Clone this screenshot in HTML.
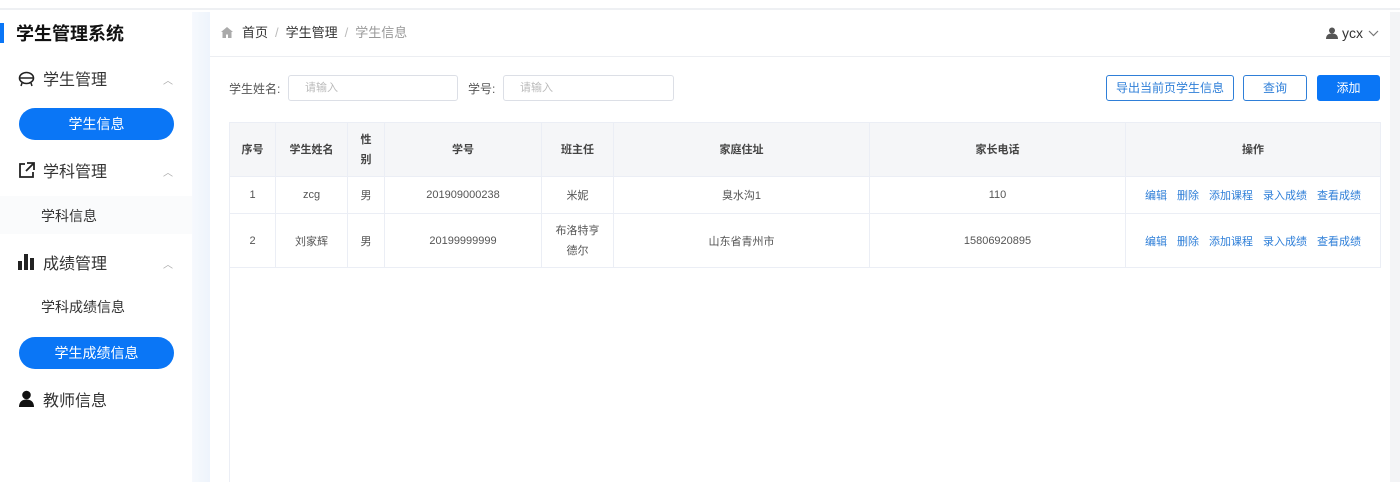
<!DOCTYPE html>
<html><head><meta charset="utf-8"><style>
*{margin:0;padding:0;box-sizing:border-box}
body{width:1400px;height:482px;overflow:hidden;background:#fff;font-family:"Liberation Sans","Noto Sans CJK SC",sans-serif;position:relative}
.top{position:absolute;left:0;top:0;width:1400px;height:10px;background:#fff;border-bottom:2px solid #eef0f3}
.side{position:absolute;left:0;top:12px;width:192px;height:470px;background:#fff}
.grad{position:absolute;left:192px;top:12px;width:18px;height:470px;background:linear-gradient(90deg,#f6f9fd,#eef4fc)}
.rstrip{position:absolute;left:1390px;top:12px;width:10px;height:470px;background:#f3f4f6}
.title{position:absolute;left:16px;top:20px;font-size:18px;font-weight:bold;color:#111}
.bar{position:absolute;left:0;top:23px;width:4px;height:20px;background:#0a76f6}
.mi{position:absolute;left:43px;font-size:16px;color:#333}
.ico{position:absolute;left:18px}
.car{position:absolute;left:163px;font-size:10px;color:#aaa}
.pill{position:absolute;left:19px;width:155px;height:32px;border-radius:16px;background:#0a76f6;color:#fff;font-size:14px;text-align:center;line-height:32px}
.sub{position:absolute;left:41px;font-size:14px;color:#333}
.hdr{position:absolute;left:210px;top:12px;width:1180px;height:45px;border-bottom:1px solid #eceef2;background:#fff}
.bc{position:absolute;left:242px;top:22px;font-size:13px;color:#333}
.bc span.s{color:#bbb;margin:0 7px}
.lbl{position:absolute;top:80px;font-size:12px;color:#555}
.inp{position:absolute;top:75px;height:26px;border:1px solid #dcdfe6;border-radius:3px;font-size:11px;color:#bbb;padding-left:16px;line-height:24px}
.btn{position:absolute;top:75px;height:26px;border:1px solid #2f7fd8;border-radius:3px;font-size:12px;color:#2f7fd8;text-align:center;line-height:24px;background:#fff}
table{position:absolute;left:229px;top:122px;width:1151px;border-collapse:collapse;font-size:11px;color:#555;text-align:center;table-layout:fixed}
td,th{border:1px solid #ebeef5;padding:0}
th{background:#f5f6f8;font-weight:bold;color:#444;height:54px;line-height:20px}
.lk{color:#2f7fd8;margin:0 5px}
.tl{position:absolute;left:229px;top:267px;width:1px;height:215px;background:#ebeef5}
</style></head><body>
<div class="top"></div>
<div class="side"></div><div class="grad"></div><div class="rstrip"></div>
<div class="bar"></div><div class="title">学生管理系统</div>
<svg class="ico" style="top:71px" width="17" height="16" viewBox="0 0 17 16"><ellipse cx="8.5" cy="7" rx="7" ry="5.5" fill="none" stroke="#222" stroke-width="1.6"/><line x1="2" y1="7" x2="15" y2="7" stroke="#222" stroke-width="1.5"/><path d="M4 12 L3 15 M13 12 L14 15" stroke="#222" stroke-width="1.5"/></svg>
<div class="mi" style="top:66px">学生管理</div><div class="car" style="top:72px">︿</div>
<div class="pill" style="top:108px">学生信息</div>
<svg class="ico" style="top:162px" width="17" height="17" viewBox="0 0 17 17"><path d="M7 2H2v13h13v-5" fill="none" stroke="#222" stroke-width="1.8"/><path d="M9 1h7v7M16 1L8 9" fill="none" stroke="#222" stroke-width="1.8"/></svg>
<div class="mi" style="top:158px">学科管理</div><div class="car" style="top:164px">︿</div>
<div style="position:absolute;left:0;top:196px;width:192px;height:38px;background:#fafbfc"></div>
<div class="sub" style="top:206px">学科信息</div>
<svg class="ico" style="top:254px" width="17" height="16" viewBox="0 0 17 16"><rect x="0" y="7" width="4" height="9" fill="#222"/><rect x="6" y="0" width="4" height="16" fill="#222"/><rect x="12" y="4" width="4" height="12" fill="#222"/></svg>
<div class="mi" style="top:250px">成绩管理</div><div class="car" style="top:256px">︿</div>
<div class="sub" style="top:297px">学科成绩信息</div>
<div class="pill" style="top:337px">学生成绩信息</div>
<svg class="ico" style="top:390px" width="17" height="17" viewBox="0 0 17 17"><circle cx="8.5" cy="5" r="4.3" fill="#111"/><path d="M1 17c0-5 3-7.5 7.5-7.5S16 12 16 17z" fill="#111"/></svg>
<div class="mi" style="top:387px">教师信息</div>
<div class="hdr"></div>
<svg style="position:absolute;left:221px;top:27px" width="12" height="11" viewBox="0 0 12 11"><path d="M6 0L0 5h1.5v6h3.5V7.5h2V11h3.5V5H12z" fill="#aaa"/></svg>
<div class="bc">首页<span class="s">/</span>学生管理<span class="s">/</span><span style="color:#999">学生信息</span></div>
<svg style="position:absolute;left:1326px;top:27px" width="12" height="12" viewBox="0 0 12 12"><circle cx="6" cy="3.5" r="3" fill="#555"/><path d="M0 12c0-4 2.5-5.5 6-5.5S12 8 12 12z" fill="#555"/></svg>
<div style="position:absolute;left:1342px;top:25px;font-size:14px;color:#333">ycx</div>
<svg style="position:absolute;left:1368px;top:30px" width="11" height="7" viewBox="0 0 11 7"><path d="M1 1l4.5 4.5L10 1" fill="none" stroke="#777" stroke-width="1.2"/></svg>
<div class="lbl" style="left:229px">学生姓名:</div>
<div class="inp" style="left:288px;width:170px">请输入</div>
<div class="lbl" style="left:468px">学号:</div>
<div class="inp" style="left:503px;width:171px">请输入</div>
<div class="btn" style="left:1106px;width:128px">导出当前页学生信息</div>
<div class="btn" style="left:1243px;width:64px">查询</div>
<div class="btn" style="left:1317px;width:63px;background:#0a76f6;border-color:#0a76f6;color:#fff">添加</div>
<table>
<colgroup><col style="width:46px"><col style="width:72px"><col style="width:37px"><col style="width:157px"><col style="width:72px"><col style="width:256px"><col style="width:256px"><col style="width:255px"></colgroup>
<tr><th>序号</th><th>学生姓名</th><th>性<br>别</th><th>学号</th><th>班主任</th><th>家庭住址</th><th>家长电话</th><th>操作</th></tr>
<tr style="height:37px"><td>1</td><td>zcg</td><td>男</td><td>201909000238</td><td>米妮</td><td>臭水沟1</td><td>110</td><td><span class="lk">编辑</span><span class="lk">删除</span><span class="lk">添加课程</span><span class="lk">录入成绩</span><span class="lk">查看成绩</span></td></tr>
<tr style="height:54px"><td>2</td><td>刘家辉</td><td>男</td><td>20199999999</td><td style="line-height:20px">布洛特亨<br>德尔</td><td>山东省青州市</td><td>15806920895</td><td><span class="lk">编辑</span><span class="lk">删除</span><span class="lk">添加课程</span><span class="lk">录入成绩</span><span class="lk">查看成绩</span></td></tr>
</table>
<div class="tl"></div>
</body></html>
